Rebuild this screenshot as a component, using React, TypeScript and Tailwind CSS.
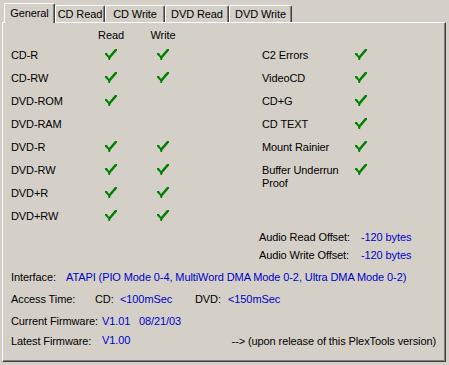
import clsx from 'clsx'

const tabs=[{t:'General',w:'w-[51px]',on:true},{t:'CD Read',w:'w-[50px]'},{t:'CD Write',w:'w-[60px]'},{t:'DVD Read',w:'w-[64px]'},{t:'DVD Write',w:'w-[63px]'}]

const media:[string,boolean,boolean][]=[
  ['CD-R',true,true],['CD-RW',true,true],['DVD-ROM',true,false],['DVD-RAM',false,false],
  ['DVD-R',true,true],['DVD-RW',true,true],['DVD+R',true,true],['DVD+RW',true,true],
]
const feats=['C2 Errors','VideoCD','CD+G','CD TEXT','Mount Rainier','Buffer Underrun Proof']

function Check(){
  return(
    <svg width="12" height="11" viewBox="0 0 12 11" className="block">
      <polygon points="0,4 2,4 4,7 10,0 12,0 12,1.5 5.5,9 5,11 3.5,11 3,8.5 0,5.5" fill="#008000"/>
    </svg>
  )
}

const blue='text-[#0000c8]'

export default function App(){
  return(
    <div className="w-[449px] h-[365px] bg-[#d4d0c8] pt-[3px] pl-[2px] text-[11px] leading-[13px] tracking-[-0.1px] text-black overflow-hidden" style={{fontFamily:'"Liberation Sans", Arial, sans-serif'}}>
      {/* tab strip */}
      <div className="flex items-end h-[19px] pl-[2px]">
        {tabs.map(x=>(
          <div key={x.t} className={clsx(x.w,'text-center border-l border-t border-white border-r border-r-[#404040] rounded-t-[2px] shadow-[inset_-1px_0_0_#808080]',
            x.on?'h-[20px] -mb-[1px] relative z-10 bg-[#d4d0c8] pt-[3px]':'h-[17px] pt-[2px]')}>{x.t}</div>
        ))}
      </div>
      {/* page */}
      <div className="w-[444px] h-[340px] border border-white border-r-[#404040] border-b-[#404040] shadow-[inset_-1px_-1px_0_#808080] pl-[8px] pr-[9px]">
        <div className="flex">
          <div className="w-[251px]">
            <div className="flex h-[21px] pt-[6px]">
              <div className="w-[76px]"/>
              <div className="w-[48px] text-center">Read</div>
              <div className="w-[56px] text-center">Write</div>
            </div>
            {media.map(([n,r,w])=>(
              <div key={n} className="flex items-start h-[23px] pt-[5px]">
                <div className="w-[76px]">{n}</div>
                <div className="w-[48px] flex justify-center">{r&&<Check/>}</div>
                <div className="w-[56px] flex justify-center">{w&&<Check/>}</div>
              </div>
            ))}
          </div>
          <div>
            <div className="h-[21px]"/>
            {feats.map(f=>(
              <div key={f} className="flex items-start min-h-[23px] pt-[5px]">
                <div className="w-[87px]">{f}</div>
                <div className="w-[24px] flex justify-center">
                  <Check/>
                </div>
              </div>
            ))}
          </div>
        </div>
        <div className="flex h-[18px] items-center ml-[248px]">
          <div className="w-[102px]">Audio Read Offset:</div>
          <div className={blue}>-120 bytes</div>
        </div>
        <div className="flex h-[18px] items-center ml-[248px]">
          <div className="w-[102px]">Audio Write Offset:</div>
          <div className={blue}>-120 bytes</div>
        </div>
        <div className="flex h-[22px] items-center mt-[2px]">
          <div className="w-[55px]">Interface:</div>
          <div className={blue}>ATAPI (PIO Mode 0-4, MultiWord DMA Mode 0-2, Ultra DMA Mode 0-2)</div>
        </div>
        <div className="flex h-[22px] items-center">
          <div className="w-[84px]">Access Time:</div>
          <div className="w-[25px]">CD:</div>
          <div className={clsx('w-[75px]',blue)}>&lt;100mSec</div>
          <div className="w-[33px]">DVD:</div>
          <div className={blue}>&lt;150mSec</div>
        </div>
        <div className="flex h-[22px] items-center">
          <div className="w-[91px]">Current Firmware:</div>
          <div className={clsx('w-[37px]',blue)}>V1.01</div>
          <div className={blue}>08/21/03</div>
        </div>
        <div className="flex h-[18px] items-center">
          <div className="w-[91px]">Latest Firmware:</div>
          <div className={clsx('-mt-[2px]',blue)}>V1.00</div>
          <div className="ml-auto">--&gt; (upon release of this PlexTools version)</div>
        </div>
      </div>
    </div>
  )
}
